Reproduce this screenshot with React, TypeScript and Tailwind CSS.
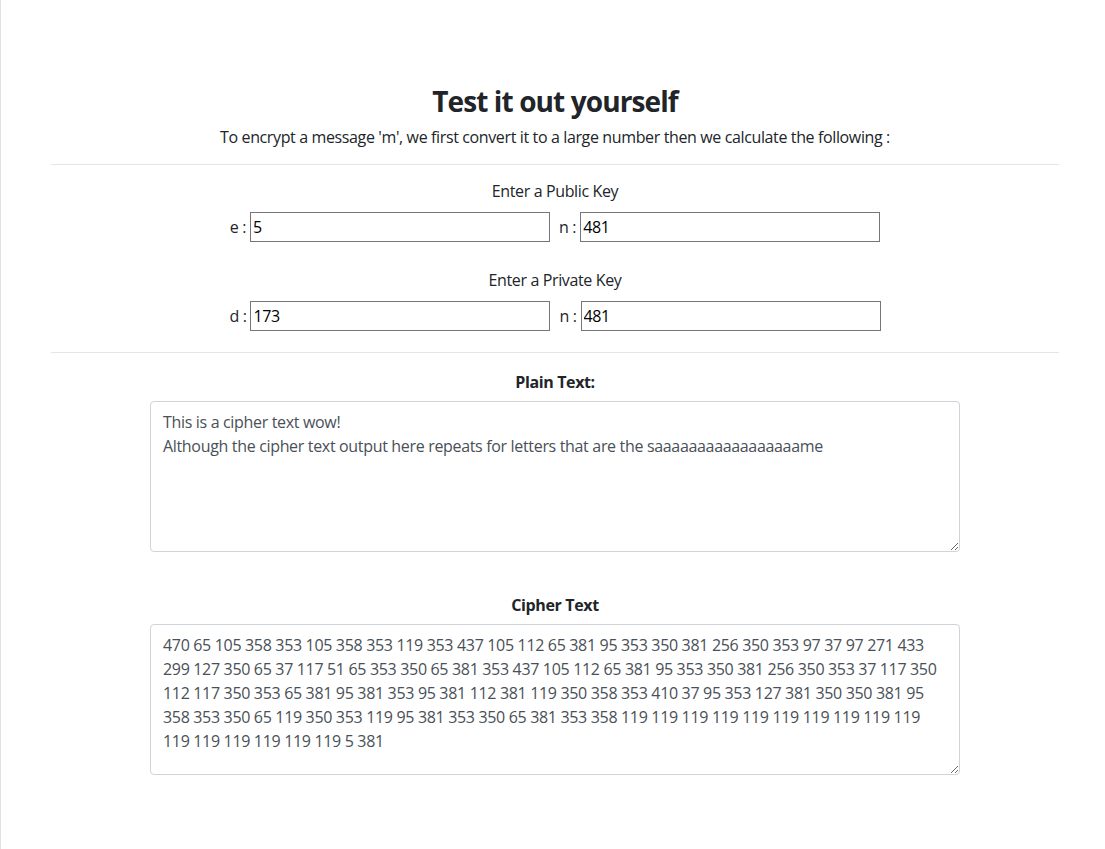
import React from 'react';

const cipher = [
  '470 65 105 358 353 105 358 353 119 353 437 105 112 65 381 95 353 350 381 256 350 353 97 37 97 271 433',
  '299 127 350 65 37 117 51 65 353 350 65 381 353 437 105 112 65 381 95 353 350 381 256 350 353 37 117 350',
  '112 117 350 353 65 381 95 381 353 95 381 112 381 119 350 358 353 410 37 95 353 127 381 350 350 381 95',
  '358 353 350 65 119 350 353 119 95 381 353 350 65 381 353 358 119 119 119 119 119 119 119 119 119 119',
  '119 119 119 119 119 119 5 381',
].join(' ');

function App() {
  const [e, setE] = React.useState('5');
  const [n1, setN1] = React.useState('481');
  const [d, setD] = React.useState('173');
  const [n2, setN2] = React.useState('481');
  const [plain, setPlain] = React.useState(
    'This is a cipher text wow!\nAlthough the cipher text output here repeats for letters that are the saaaaaaaaaaaaaaaaame'
  );

  return (
    <div className="min-h-screen bg-white border-l border-[#dee2e6] font-['Open_Sans','Noto_Sans',sans-serif] text-[16px] leading-6 tracking-[-0.37px] text-[#212529]">
      <div className="ml-[50px] w-[1008px] pt-[85px] pb-16 text-center">
        {/* Header */}
        <h3 className="text-[28px] leading-[1.2] font-bold tracking-[-0.9px] mb-[6px]">Test it out yourself</h3>
        <p>To encrypt a message 'm', we first convert it to a large number then we calculate the following :</p>
        <hr className="mt-[15px] border-t border-[#e5e5e5]" />

        {/* Keys */}
        <div className="mt-[14px]">Enter a Public Key</div>
        <div className="mt-[9px] flex justify-center items-center">
          <span>e :</span>
          <input
            value={e}
            onChange={(ev) => setE(ev.target.value)}
            className="ml-1 w-[300px] h-[30px] px-[2px] border border-[#767676] text-black outline-none"
          />
          <span className="ml-[9px]">n :</span>
          <input
            value={n1}
            onChange={(ev) => setN1(ev.target.value)}
            className="ml-1 w-[300px] h-[30px] px-[2px] border border-[#767676] text-black outline-none"
          />
        </div>

        <div className="mt-[26px]">Enter a Private Key</div>
        <div className="mt-[9px] flex justify-center items-center">
          <span>d :</span>
          <input
            value={d}
            onChange={(ev) => setD(ev.target.value)}
            className="ml-1 w-[300px] h-[30px] px-[2px] border border-[#767676] text-black outline-none"
          />
          <span className="ml-[9px]">n :</span>
          <input
            value={n2}
            onChange={(ev) => setN2(ev.target.value)}
            className="ml-1 w-[300px] h-[30px] px-[2px] border border-[#767676] text-black outline-none"
          />
        </div>
        <hr className="mt-[21px] border-t border-[#e5e5e5]" />

        {/* Plain text */}
        <div className="mt-[17px] font-bold">Plain Text:</div>
        <div className="mt-[7px] flex justify-center">
          <textarea
            value={plain}
            onChange={(ev) => setPlain(ev.target.value)}
            className="w-[810px] h-[151px] px-3 pt-[8px] pb-1.5 border border-[#ced4da] rounded text-[#495057] text-left tracking-[-0.33px] outline-none"
          />
        </div>

        {/* Cipher text */}
        <div className="mt-[41px] font-bold">Cipher Text</div>
        <div className="mt-[7px] flex justify-center">
          <textarea
            value={cipher}
            readOnly
            className="w-[810px] h-[151px] px-3 pt-[8px] pb-1.5 border border-[#ced4da] rounded text-[#495057] text-left tracking-[-0.33px] outline-none"
          />
        </div>
      </div>
    </div>
  );
}

export default App;
